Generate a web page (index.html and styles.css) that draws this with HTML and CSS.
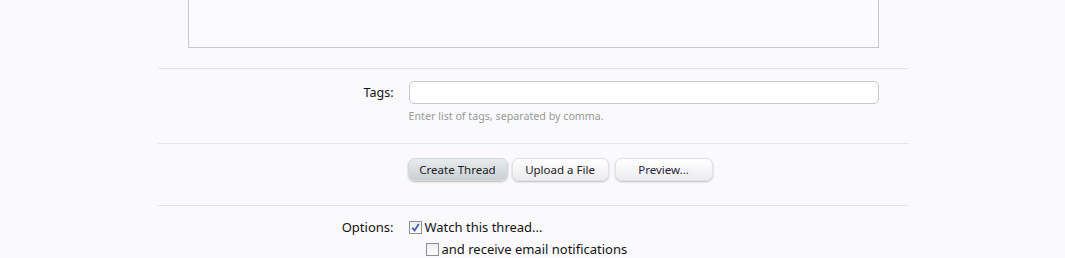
FILE: index.html
```html
<!DOCTYPE html>
<html lang="en">
<head>
  <meta charset="UTF-8" />
  <title>Post New Thread</title>
  <link rel="stylesheet" href="styles.css">
</head>
<body>
  <form class="thread-form">
    <div class="editor"></div>

    <dl class="ctrl-row tags-row">
      <dt><label for="tags">Tags:</label></dt>
      <dd>
        <input type="text" id="tags" class="text-input" />
        <p class="explain">Enter list of tags, separated by comma.</p>
      </dd>
    </dl>

    <dl class="ctrl-row submit-row">
      <dt></dt>
      <dd>
        <div class="buttons">
          <button type="button" class="btn primary">Create Thread</button>
          <button type="button" class="btn upload">Upload a File</button>
          <button type="button" class="btn preview">Preview...</button>
        </div>
      </dd>
    </dl>

    <dl class="ctrl-row options-row">
      <dt>Options:</dt>
      <dd>
        <label class="check">
          <span class="box checked">
            <svg width="9" height="9" viewBox="0 0 9 9"><path d="M1.2 4.6 L3.6 7.4 L7.8 1" fill="none" stroke="#4a5fa8" stroke-width="1.8"/></svg>
          </span>
          Watch this thread...
        </label>
        <label class="check sub">
          <span class="box"></span>
          and receive email notifications
        </label>
      </dd>
    </dl>
  </form>
</body>
</html>
```

FILE: styles.css
```css
body {
  margin: 0;
  background-color: #fafafc;
  font-family: 'Noto Sans', 'Open Sans', sans-serif;
  font-size: 12.5px;
  color: #141414;
}
.thread-form {
  width: 750px;
  margin: 0 auto;
}
.editor {
  height: 47px;
  margin: 0 29px 20px 30px;
  border: 1px solid #c8c8c8;
  border-top: none;
  background: #fbfbfd;
}
.ctrl-row {
  display: flex;
  margin: 0;
  border-top: 1px solid #e3e6e9;
}
.ctrl-row dt {
  width: 236px;
  padding-right: 15px;
  text-align: right;
}
.ctrl-row dd {
  margin: 0;
  flex: 1;
  padding-right: 29px;
}
.tags-row {
  padding: 12px 0 20px;
}
.tags-row dt {
  padding-top: 3px;
}
.text-input {
  display: block;
  box-sizing: border-box;
  width: 100%;
  height: 23px;
  margin: 0;
  border: 1px solid #c9c9c9;
  border-radius: 5px;
  background: #fff;
}
.explain {
  margin: 5px 0 0;
  font-size: 10.7px;
  color: #999;
}
.submit-row {
  padding: 14px 0 24px;
}
.buttons {
  display: flex;
  margin-left: -1px;
}
.btn {
  height: 23px;
  padding: 0;
  border: 1px solid #e0e2e5;
  border-radius: 7px;
  background: linear-gradient(#ffffff, #ececef);
  box-shadow: 0 1px 2px rgba(0, 0, 0, 0.25);
  font-family: inherit;
  font-size: 11.5px;
  color: #222;
}
.btn.primary {
  width: 100px;
  border-color: #d2d7db;
  background: linear-gradient(#e9ecef, #c9cfd3);
}
.btn.upload {
  width: 97px;
  margin-left: 4px;
}
.btn.preview {
  width: 98px;
  margin-left: 6px;
  color: #2b1d3a;
}
.options-row {
  padding-top: 10px;
}
.options-row dt {
  padding-top: 2px;
  font-size: 13px;
}
.check {
  display: flex;
  align-items: center;
  gap: 3px;
  height: 22px;
  font-size: 13px;
}
.check.sub {
  margin-left: 17px;
}
.box {
  display: inline-flex;
  align-items: center;
  justify-content: center;
  box-sizing: border-box;
  width: 13px;
  height: 13px;
  border: 1px solid #8e8f94;
  background: linear-gradient(#ececef, #ffffff);
}
```
